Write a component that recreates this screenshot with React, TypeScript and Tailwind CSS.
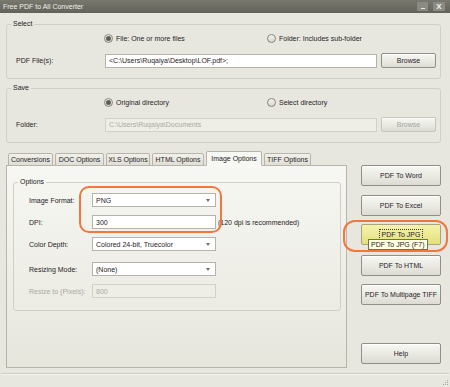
import React from 'react';

const Radio = ({ checked, label }: { checked?: boolean; label: string }) => (
    <div className="flex items-center gap-[3px] h-[10px]">
        <span className="w-[9px] h-[9px] rounded-full border border-[#86857e] bg-linear-to-b from-[#f4f4f0] to-[#d7d6ce] flex items-center justify-center">
            {checked && <span className="w-[5px] h-[5px] rounded-full bg-[#5e5e58]" />}
        </span>
        <span>{label}</span>
    </div>
);

const Btn = ({ children, disabled, className = '' }: { children: React.ReactNode; disabled?: boolean; className?: string }) => (
    <div
        className={`flex items-center justify-center rounded-[2px] border bg-linear-to-b from-[#f8f8f4] to-[#dddcd3] shadow-[inset_0_1px_0_#ffffff] ${
            disabled ? 'border-[#c6c5bc] text-[#a3a29b]' : 'border-[#8f8e87] text-[#2a2228]'
        } ${className}`}
    >
        {children}
    </div>
);

const Combo = ({ value }: { value: string }) => (
    <div className="w-[124px] h-[14px] bg-white border border-[#b6b4aa] flex items-center justify-between pl-[3px] pr-[5px]">
        <span>{value}</span>
        <span className="w-0 h-0 border-l-[2.5px] border-r-[2.5px] border-t-[3px] border-l-transparent border-r-transparent border-t-[#707069]" />
    </div>
);

const TextBox = ({ value, disabled, className = '' }: { value: string; disabled?: boolean; className?: string }) => (
    <div
        className={`h-[14px] border flex items-center pl-[3px] ${
            disabled ? 'bg-[#eeede6] border-[#d3d2c9] text-[#abaaa2]' : 'bg-white border-[#b6b4aa]'
        } ${className}`}
    >
        {value}
    </div>
);

// pestañas con su ancho fijo
const tabs = [
    { label: 'Conversions', w: 'w-[45px]' },
    { label: 'DOC Options', w: 'w-[49px]' },
    { label: 'XLS Options', w: 'w-[44px]' },
    { label: 'HTML Options', w: 'w-[52px]' },
    { label: 'Image Options', w: 'w-[56px]', active: true },
    { label: 'TIFF Options', w: 'w-[47px]' },
];

const App = () => {
    return (
        <div className="w-[450px] h-[387px] bg-[#e8e7df] font-['Liberation_Sans',Arial,sans-serif] text-[7px] text-[#26221f] leading-none relative overflow-hidden flex flex-col">
            {/* --- BARRA DE TITULO --- */}
            <div className="h-[13px] bg-linear-to-b from-[#78786f] to-[#62625a] flex items-center justify-between pl-[3px] pr-[5px]">
                <span className="text-[#f1f0e8]">Free PDF to All Converter</span>
                <div className="flex items-center gap-[5px]">
                    <span className="w-[11px] h-[9px] rounded-[1px] bg-[#8b8b83] flex items-end justify-center pb-[2px]">
                        <span className="w-[4px] h-[1px] bg-[#e6e6e0]" />
                    </span>
                    <span className="w-[12px] h-[9px] rounded-[1px] bg-[#8b8b83] flex items-center justify-center text-[#f4f4ee] text-[8px] font-bold">
                        X
                    </span>
                </div>
            </div>

            <div className="flex-1 flex flex-col px-[6px]">
                {/* --- SELECT --- */}
                <fieldset className="mt-[7px] h-[59px] w-[435px] border border-[#d1cfc5] rounded-[3px]">
                    <legend className="ml-[4px] px-[2px] leading-[8px]">Select</legend>
                    <div className="flex mt-[5px] pl-[97px]">
                        <div className="w-[163px]">
                            <Radio checked label="File:  One or more files" />
                        </div>
                        <Radio label="Folder: Includes sub-folder" />
                    </div>
                    <div className="flex items-center mt-[10px] pl-[9px]">
                        <span className="w-[89px]">PDF File(s):</span>
                        <TextBox value="<C:\Users\Ruqaiya\Desktop\LOF.pdf>;" className="w-[272px]" />
                        <Btn className="ml-[4px] w-[55px] h-[15px]">Browse</Btn>
                    </div>
                </fieldset>

                {/* --- SAVE --- */}
                <fieldset className="mt-[5px] h-[59px] w-[435px] border border-[#d1cfc5] rounded-[3px]">
                    <legend className="ml-[4px] px-[2px] leading-[8px]">Save</legend>
                    <div className="flex mt-[5px] pl-[97px]">
                        <div className="w-[163px]">
                            <Radio checked label="Original directory" />
                        </div>
                        <Radio label="Select directory" />
                    </div>
                    <div className="flex items-center mt-[10px] pl-[9px]">
                        <span className="w-[89px]">Folder:</span>
                        <TextBox value="C:\Users\Ruqaiya\Documents" disabled className="w-[272px]" />
                        <Btn disabled className="ml-[4px] w-[55px] h-[15px]">Browse</Btn>
                    </div>
                </fieldset>

                {/* --- PESTAÑAS + BOTONES --- */}
                <div className="flex mt-[8px]">
                    <div className="flex flex-col w-[341px]">
                        <div className="flex items-end gap-[2px] h-[15px] pl-[2px] relative z-10">
                            {tabs.map((t) => (
                                <div
                                    key={t.label}
                                    className={`${t.w} flex items-center justify-center rounded-t-[2px] border border-[#b7b5ab] ${
                                        t.active ? 'h-[15px] bg-[#f7f7f3] border-b-transparent' : 'h-[13px] bg-linear-to-b from-[#f1f0ea] to-[#e0dfd6]'
                                    }`}
                                >
                                    {t.label}
                                </div>
                            ))}
                        </div>
                        <div className="-mt-px h-[203px] border border-[#b7b5ab] bg-linear-to-b from-[#f7f7f3] to-[#e7e6dd] pl-[6px]">
                            <fieldset className="mt-[12px] h-[133px] w-[328px] border border-[#d1cfc5] rounded-[3px]">
                                <legend className="ml-[4px] px-[2px] leading-[8px]">Options</legend>
                                <div className="flex flex-col pl-[15px]">
                                    <div className="flex items-center mt-[7px]">
                                        <span className="w-[63px]">Image Format:</span>
                                        <Combo value="PNG" />
                                    </div>
                                    <div className="flex items-center mt-[8px]">
                                        <span className="w-[63px]">DPI:</span>
                                        <TextBox value="300" className="w-[124px]" />
                                        <span className="ml-[2px]">(120 dpi is recommended)</span>
                                    </div>
                                    <div className="flex items-center mt-[8px]">
                                        <span className="w-[63px]">Color Depth:</span>
                                        <Combo value="Colored 24-bit, Truecolor" />
                                    </div>
                                    <div className="flex items-center mt-[11px]">
                                        <span className="w-[63px]">Resizing Mode:</span>
                                        <Combo value="(None)" />
                                    </div>
                                    <div className="flex items-center mt-[8px]">
                                        <span className="w-[63px] text-[#aaa9a1]">Resize to (Pixels):</span>
                                        <TextBox value="800" disabled className="w-[124px]" />
                                    </div>
                                </div>
                            </fieldset>
                        </div>
                    </div>

                    <div className="flex flex-col ml-[14px] w-[80px] pt-[14px]">
                        <Btn className="h-[21px]">PDF To Word</Btn>
                        <Btn className="h-[21px] mt-[9px]">PDF To Excel</Btn>
                        <div className="h-[21px] mt-[8px] rounded-[2px] border border-[#a8a57c] bg-linear-to-b from-[#f5f3ac] to-[#e4e07a] flex items-center justify-center">
                            <span className="border border-dotted border-[#3a3a30] px-[2px] py-[1px]">PDF To JPG</span>
                        </div>
                        <Btn className="h-[21px] mt-[10px]">PDF To HTML</Btn>
                        <Btn className="h-[21px] mt-[8px]">PDF To Multipage TIFF</Btn>
                        <Btn className="h-[21px] mt-[38px]">Help</Btn>
                    </div>
                </div>

                {/* --- BARRA DE ESTADO --- */}
                <div className="mt-[5px] -mx-[5px] h-px bg-[#cdcbc2] border-b border-[#f6f5f0] box-content" />
                <div className="flex-1 flex justify-end items-end pb-[2px] -mr-[4px]">
                    <div className="grid grid-cols-3 gap-[1px]">
                        <span />
                        <span />
                        <span className="w-[1px] h-[1px] bg-[#a5a49c]" />
                        <span />
                        <span className="w-[1px] h-[1px] bg-[#a5a49c]" />
                        <span className="w-[1px] h-[1px] bg-[#a5a49c]" />
                        <span className="w-[1px] h-[1px] bg-[#a5a49c]" />
                        <span className="w-[1px] h-[1px] bg-[#a5a49c]" />
                        <span className="w-[1px] h-[1px] bg-[#a5a49c]" />
                    </div>
                </div>
            </div>

            {/* --- ANOTACIONES NARANJAS + TOOLTIP --- */}
            <div className="absolute left-[79px] top-[186px] w-[143px] h-[47px] border-2 border-[#f1773d] rounded-[10px]" />
            <div className="absolute left-[343px] top-[220px] w-[105px] h-[32px] border-2 border-[#f1773d] rounded-[12px]" />
            <div className="absolute left-[368px] top-[239px] h-[11px] px-[2px] bg-[#ffffe1] border border-[#6f6f6a] flex items-center whitespace-nowrap">
                PDF To JPG (F7)
            </div>
        </div>
    );
};

export default App;
